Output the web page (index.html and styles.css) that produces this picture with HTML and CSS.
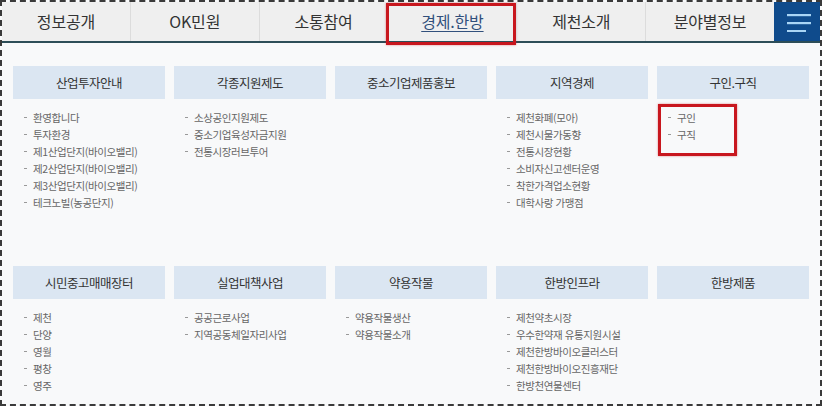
FILE: index.html
```html
<!DOCTYPE html>
<html lang="ko">
<head>
<meta charset="utf-8">
<title>경제.한방</title>
<link rel="stylesheet" href="styles.css">
</head>
<body>
<div class="frame">
  <nav class="gnb">
    <ul class="tabs">
      <li class="tab"><a href="#">정보공개</a></li>
      <li class="tab"><a href="#">OK민원</a></li>
      <li class="tab"><a href="#">소통참여</a></li>
      <li class="tab active"><a href="#">경제.한방</a></li>
      <li class="tab"><a href="#">제천소개</a></li>
      <li class="tab"><a href="#">분야별정보</a></li>
    </ul>
    <button class="menu-btn" aria-label="전체메뉴">
      <svg width="24" height="20" viewBox="0 0 24 20">
        <rect x="0" y="2" width="24" height="2.2" fill="#a9d5f5"/>
        <rect x="0" y="10" width="24" height="2.2" fill="#a9d5f5"/>
        <rect x="0" y="18" width="19" height="2.2" fill="#a9d5f5"/>
      </svg>
    </button>
  </nav>
  <div class="panel">
    <section class="col">
      <h3 class="head">산업투자안내</h3>
      <ul class="list">
        <li>환영합니다</li>
        <li>투자환경</li>
        <li>제1산업단지(바이오밸리)</li>
        <li>제2산업단지(바이오밸리)</li>
        <li>제3산업단지(바이오밸리)</li>
        <li>테크노빌(농공단지)</li>
      </ul>
    </section>
    <section class="col">
      <h3 class="head">각종지원제도</h3>
      <ul class="list">
        <li>소상공인지원제도</li>
        <li>중소기업육성자금지원</li>
        <li>전통시장러브투어</li>
      </ul>
    </section>
    <section class="col">
      <h3 class="head">중소기업제품홍보</h3>
      <ul class="list"></ul>
    </section>
    <section class="col">
      <h3 class="head">지역경제</h3>
      <ul class="list">
        <li>제천화폐(모아)</li>
        <li>제천시물가동향</li>
        <li>전통시장현황</li>
        <li>소비자신고센터운영</li>
        <li>착한가격업소현황</li>
        <li>대학사랑 가맹점</li>
      </ul>
    </section>
    <section class="col">
      <h3 class="head">구인.구직</h3>
      <ul class="list marked">
        <li>구인</li>
        <li>구직</li>
      </ul>
    </section>

    <section class="col">
      <h3 class="head">시민중고매매장터</h3>
      <ul class="list">
        <li>제천</li>
        <li>단양</li>
        <li>영월</li>
        <li>평창</li>
        <li>영주</li>
      </ul>
    </section>
    <section class="col">
      <h3 class="head">실업대책사업</h3>
      <ul class="list">
        <li>공공근로사업</li>
        <li>지역공동체일자리사업</li>
      </ul>
    </section>
    <section class="col">
      <h3 class="head">약용작물</h3>
      <ul class="list">
        <li>약용작물생산</li>
        <li>약용작물소개</li>
      </ul>
    </section>
    <section class="col">
      <h3 class="head">한방인프라</h3>
      <ul class="list">
        <li>제천약초시장</li>
        <li>우수한약재 유통지원시설</li>
        <li>제천한방바이오클러스터</li>
        <li>제천한방바이오진흥재단</li>
        <li>한방천연물센터</li>
      </ul>
    </section>
    <section class="col">
      <h3 class="head">한방제품</h3>
      <ul class="list"></ul>
    </section>
  </div>
</div>
</body>
</html>
```

FILE: styles.css
```css
* { box-sizing: border-box; }
html, body {
  margin: 0;
  padding: 0;
  background: #ffffff;
}
body {
  font-family: "Noto Sans CJK KR", "Noto Sans", "Liberation Sans", sans-serif;
}
.frame {
  width: 822px;
  height: 406px;
  border: 2px dashed #3a3a3a;
  background: #f8f9fa;
  display: flex;
  flex-direction: column;
  overflow: hidden;
}
.gnb {
  display: flex;
  height: 41px;
  background: #efefef;
  border-bottom: 2px solid #2d4e58;
  flex: none;
}
.tabs {
  list-style: none;
  margin: 0;
  padding: 0;
  display: flex;
  flex: 1;
}
.tab {
  flex: 1;
  display: flex;
  align-items: center;
  justify-content: center;
  border-left: 1px solid #dcdcdc;
  position: relative;
}
.tab:first-child { border-left: none; }
.tab a {
  color: #333333;
  text-decoration: none;
  font-size: 16px;
  letter-spacing: -0.2px;
  padding-bottom: 2px;
}
.tab.active a {
  color: #31507c;
  text-decoration: underline;
  text-underline-offset: 3px;
}
.tab.active::after {
  content: "";
  position: absolute;
  left: -2px;
  right: 0;
  top: 1px;
  bottom: -4px;
  border: 3px solid #c8171e;
  box-shadow: 0 0 2px rgba(200, 23, 30, 0.5);
}
.menu-btn {
  width: 46px;
  flex: none;
  border: none;
  margin: 0;
  padding: 0 0 0 3px;
  background: #0f4b8c;
  display: flex;
  align-items: center;
  justify-content: center;
}
.panel {
  flex: 1;
  display: grid;
  grid-template-columns: repeat(5, 152px);
  grid-template-rows: 200px 1fr;
  column-gap: 9px;
  padding: 23px 0 0 11px;
}
.head {
  margin: 0;
  height: 33px;
  background: #dbe6f2;
  display: flex;
  align-items: center;
  justify-content: center;
  font-size: 12.5px;
  font-weight: normal;
  color: #333333;
  letter-spacing: -0.5px;
}
.list {
  list-style: none;
  margin: 10px 0 0 0;
  padding: 0 0 0 11px;
  position: relative;
}
.list li {
  font-size: 10.5px;
  line-height: 17px;
  height: 17px;
  color: #666666;
  letter-spacing: -0.4px;
  display: flex;
  align-items: center;
}
.list li::before {
  content: "";
  width: 3px;
  height: 1.5px;
  background: #999999;
  margin-right: 6px;
  flex: none;
}
.list.marked::after {
  content: "";
  position: absolute;
  left: 1px;
  top: -5px;
  width: 73px;
  height: 46px;
  border: 3px solid #c8171e;
  box-shadow: 0 0 2px rgba(200, 23, 30, 0.5);
}
```
